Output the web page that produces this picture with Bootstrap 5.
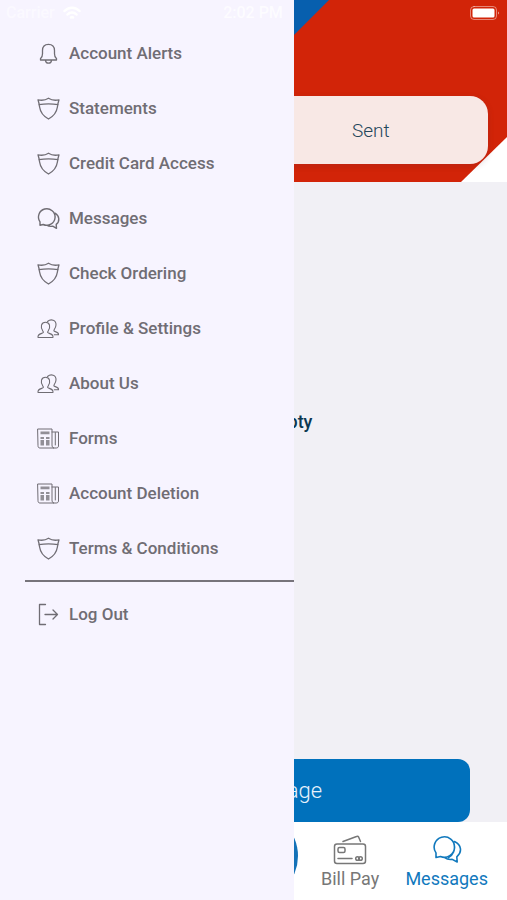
<!DOCTYPE html>
<html lang="en">
<head>
<meta charset="utf-8">
<meta name="viewport" content="width=device-width, initial-scale=1">
<title>Messages</title>
<link rel="stylesheet" href="https://cdn.jsdelivr.net/npm/bootstrap@5.3.0/dist/css/bootstrap.min.css">
<style>
body { font-family: Roboto, "Liberation Sans", sans-serif; background: #f1f0f5; }
svg { display: block; fill: none; stroke: currentColor; stroke-linejoin: round; stroke-linecap: round; }
.banner { height: 182px; padding: 0 19px 18px; background: #fff; }
.banner-art { position: absolute; inset: 0; width: 100%; height: 100%; stroke: none; }
.segments { height: 68px; background: #f8e8e5; border-radius: 18px; box-shadow: 0 2px 6px rgba(90, 40, 60, .2); overflow: hidden; }
.segments button { font-size: 19px; font-weight: 300; color: #24465a; padding-top: 8px; }
.empty-note { font-size: 18px; font-weight: 500; color: #0b3850; padding-bottom: 98px; }
.compose { height: 63px; margin: 0 37px; border-radius: 12px; font-size: 22px; font-weight: 300; color: #e8f2fb; background: #0071bc; border: 0; }
.tabbar { height: 78px; padding: 0 12px; background: #fff; }
.tabbar a { font-size: 18px; line-height: 24px; color: #777; padding-top: 13px; gap: 2px; }
.tabbar a.current { color: #1179bd; }
.round-btn { width: 90px; height: 90px; margin-top: -11px; background: #1472b8; }
.drawer { width: 58%; background: #f7f4ff; z-index: 2; padding-top: 26px; }
.drawer a { height: 55px; padding-left: 36px; gap: 9px; font-size: 17px; font-weight: 500; color: #706d74; }
.drawer hr { margin: 4px 0 5px 25px; border-top: 2px solid #77747b; opacity: 1; }
.statusbar { height: 26px; z-index: 3; padding: 0 7px 0 6px; color: #fff; font-size: 16px; font-weight: 500; }
</style>
<script src="https://cdn.jsdelivr.net/npm/bootstrap@5.3.0/dist/js/bootstrap.bundle.min.js"></script>
</head>
<body>
<svg class="d-none" aria-hidden="true">
  <symbol id="bell" viewBox="0 0 24 24"><path d="M4.500 18h16v-1.400c-1.600-1-2-2.200-2-4.800V8.500c0-3.800-2.200-6.200-6-6.200s-6 2.400-6 6.200v3.300c0 2.600-.4 3.800-2 4.800zM9.500 18.200c.2 4 5.800 4 6 0"/></symbol>
  <symbol id="shield" viewBox="0 0 24 24"><path d="M2 2.800C5.500 3.600 9.500 3.200 12.500 1.200c3 2 7 2.400 10.500 1.600-.8 2.500-1.300 5-1.600 7.200-.7 5.200-4 9.300-8.900 12C7.600 19.300 4.300 15.200 3.600 10 3.300 7.800 2.800 5.300 2 2.800zM2.900 7.600c6-.8 13.200-.8 19.200 0"/></symbol>
  <symbol id="chat" viewBox="0 0 24 24"><path d="M4 18.200v-3.400A8.300 8.300 0 1 1 7.200 17.500zM19 6.200c4.700 2.800 5 8.200 1.200 11.200l.3 4-3.800-2.200c-2.200.4-4.300.1-6-1"/></symbol>
  <symbol id="people" viewBox="0 0 24 24"><path d="M2 20.500c-.4-2.700 1-3.300 3.700-4.100 1.700-.5 2.200-1 1.200-2.300C4 10 5.200 5.200 9.500 5.200s5.500 4.800 2.600 8.900c-1 1.300-.5 1.800 1.200 2.300 2.700.8 4.100 1.400 3.700 4.100zM11.500 4.500c3.500-3 8.800-1.500 8.500 3.500-.1 2-.9 3.300-1.700 4.500-.8 1.300-.4 1.700 1 2.100 2.300.7 3.500 1.200 3.200 3.200h-4.200"/></symbol>
  <symbol id="news" viewBox="0 0 24 24"><path d="M2 2h14v16c0 1.500.6 3 2 3H4c-1.300 0-2-.7-2-2zM16 5h6.500v14c0 1.300-1 2-2.300 2H18M19.300 5.500v12.500"/><path stroke="none" fill="currentColor" d="M4.500 4.500h9v2.800h-9zM4.500 10H8v2H4.500zM10 10h3.500v2H10zM4.500 13H8v5.500H4.500zM10 13h3.500v5.500H10z" opacity=".75"/></symbol>
  <symbol id="logout" viewBox="0 0 24 24"><path d="M9.500 1.500h-6v20h6M9 11.500h12.500M17 7l4.500 4.500L17 16"/></symbol>
</svg>
<div class="position-relative overflow-hidden vh-100 d-flex flex-column">
  <div class="statusbar position-absolute top-0 start-0 end-0 d-flex align-items-center">
    <div class="d-flex align-items-center gap-2 col"><span class="opacity-50">Carrier</span>
      <svg width="18" height="14" viewBox="0 0 18 14" stroke-width="2.500"><path d="M1.500 5c4-4.500 11-4.500 15 0M4.500 8.500c2.500-2.700 6.500-2.700 9 0M8 11.500q1-1 2 0"/></svg></div>
    <span class="opacity-75">2:02 PM</span>
    <div class="col d-flex justify-content-end"><svg width="30" height="14" viewBox="0 0 30 14"><rect x=".5" y=".5" width="26" height="13" rx="3.500" stroke-opacity=".45"/><rect x="2.500" y="2.500" width="22" height="9" rx="1.500" fill="currentColor" stroke="none"/><path d="M28 5.500q2 1.500 0 3z" fill="currentColor" stroke="none" opacity=".6"/></svg></div>
  </div>
  <header class="banner position-relative d-flex flex-column justify-content-end">
    <svg class="banner-art" viewBox="0 0 507 182" preserveAspectRatio="none" aria-hidden="true"><path fill="#d22408" d="M0 0h507v137l-46 45H0z"/><path fill="#075fae" d="M0 0h329L147 182H0z"/></svg>
    <div class="segments position-relative d-flex">
      <button type="button" class="btn border-0 col">Inbox</button>
      <button type="button" class="btn border-0 col">Sent</button>
    </div>
  </header>
  <main class="flex-fill d-flex flex-column">
    <div class="flex-fill d-flex align-items-center justify-content-center"><p class="empty-note m-0">Inbox is Empty</p></div>
    <button type="button" class="compose">New Message</button>
  </main>
  <nav class="tabbar d-flex" aria-label="Main">
    <div class="col"></div><div class="col"></div>
    <div class="col d-flex justify-content-center"><button type="button" class="round-btn btn rounded-circle flex-shrink-0" aria-label="More"></button></div>
    <a href="#" class="col d-flex flex-column align-items-center text-decoration-none text-nowrap">
      <svg width="34" height="30" viewBox="0 0 34 30" stroke-width="1.500"><rect x="1.500" y="9" width="31" height="19.500" rx="2.500"/><path d="M10 6.500L23.500 1.500q1.500-.6 2.200.7L27.500 6.500"/><rect x="5" y="12.500" width="7" height="5" rx="1.500"/><path d="M5 23.500h14"/><circle cx="24.500" cy="23.500" r="1.800"/><circle cx="27.500" cy="23.500" r="1.800"/></svg>Bill Pay</a>
    <a href="#" class="current col d-flex flex-column align-items-center text-decoration-none text-nowrap" aria-current="page"><svg width="30" height="30" viewBox="0 0 30 30" stroke-width="1.600"><path d="M4 22.500v-4.600A10.200 10.200 0 1 1 8.500 21.500zM22.500 6.500c7 3.200 8 10.500 2.300 15.300l.4 5.200-5-2.600c-3 .4-5.500-.2-7.500-1.700M22 9c1.500 5.500-.8 11-5.500 13.500"/></svg>Messages</a>
  </nav>
  <aside class="drawer position-absolute top-0 bottom-0 start-0">
    <nav aria-label="Menu">
      <a href="#" class="d-flex align-items-center text-decoration-none"><svg width="24" height="24" stroke-width="1.300"><use href="#bell"/></svg>Account Alerts</a>
      <a href="#" class="d-flex align-items-center text-decoration-none"><svg width="24" height="24" stroke-width="1.300"><use href="#shield"/></svg>Statements</a>
      <a href="#" class="d-flex align-items-center text-decoration-none"><svg width="24" height="24" stroke-width="1.300"><use href="#shield"/></svg>Credit Card Access</a>
      <a href="#" class="d-flex align-items-center text-decoration-none"><svg width="24" height="24" stroke-width="1.400"><use href="#chat"/></svg>Messages</a>
      <a href="#" class="d-flex align-items-center text-decoration-none"><svg width="24" height="24" stroke-width="1.300"><use href="#shield"/></svg>Check Ordering</a>
      <a href="#" class="d-flex align-items-center text-decoration-none"><svg width="24" height="24" stroke-width="1.100"><use href="#people"/></svg>Profile &amp; Settings</a>
      <a href="#" class="d-flex align-items-center text-decoration-none"><svg width="24" height="24" stroke-width="1.100"><use href="#people"/></svg>About Us</a>
      <a href="#" class="d-flex align-items-center text-decoration-none"><svg width="24" height="24" stroke-width="1"><use href="#news"/></svg>Forms</a>
      <a href="#" class="d-flex align-items-center text-decoration-none"><svg width="24" height="24" stroke-width="1"><use href="#news"/></svg>Account Deletion</a>
      <a href="#" class="d-flex align-items-center text-decoration-none"><svg width="24" height="24" stroke-width="1.300"><use href="#shield"/></svg>Terms &amp; Conditions</a>
      <hr>
      <a href="#" class="d-flex align-items-center text-decoration-none"><svg width="24" height="24" stroke-width="1.300"><use href="#logout"/></svg>Log Out</a>
    </nav>
  </aside>
</div>
</body>
</html>
